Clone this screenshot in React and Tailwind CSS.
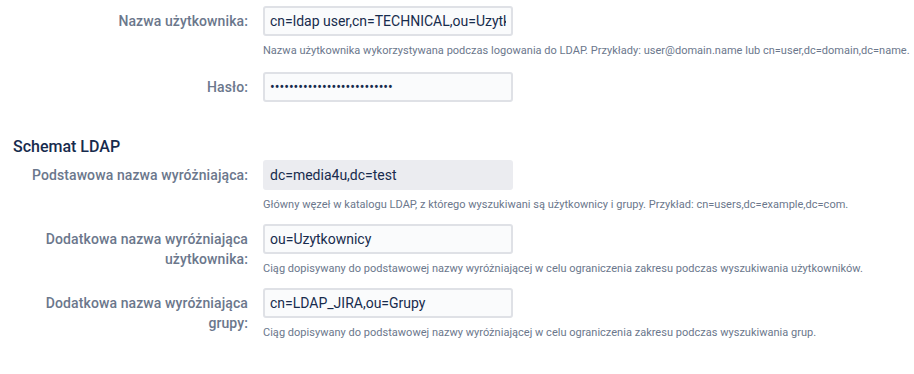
import React from "react";

const font = { fontFamily: "Roboto, 'Noto Sans', sans-serif" };

function Row({ label, value, desc, type = "text", disabled = false, gap = "mb-[11px]" }) {
  return (
    <div className={`flex items-start gap-[15px] ${gap}`}>
      <label className="w-[235px] shrink-0 text-right pt-[5px] text-[14px] leading-[20px] font-medium tracking-[0.1px] text-[#6b778c]">
        {label}
      </label>
      <div className="flex flex-col">
        <input
          type={type}
          readOnly
          value={value}
          className={`w-[250px] h-[30px] rounded-[3px] border-2 px-[5px] text-[14px] text-[#172b4d] outline-none ${
            disabled ? "bg-[#ebecf0] border-[#ebecf0]" : "bg-[#fafbfc] border-[#dfe1e6]"
          }`}
          style={font}
        />
        {desc && (
          <div className="mt-[7px] text-[11px] leading-[16px] text-[#6b778c] whitespace-nowrap tracking-[0.02px]">{desc}</div>
        )}
      </div>
    </div>
  );
}

export default function App() {
  return (
    <div className="w-[914px] h-[374px] bg-white pt-[6px] pl-[13px]" style={font}>
      <Row
        label="Nazwa użytkownika:"
        value="cn=ldap user,cn=TECHNICAL,ou=Uzytkownicy,dc=media4u,dc=test"
        desc="Nazwa użytkownika wykorzystywana podczas logowania do LDAP. Przykłady: user@domain.name lub cn=user,dc=domain,dc=name."
        gap="mb-[13px]"
      />
      <Row label="Hasło:" type="password" value="abcdefghijklmnopqrstuvwxyz" gap="" />
      <h2 className="mt-[35px] mb-[3px] text-[16px] leading-[20px] font-medium text-[#172b4d]">Schemat LDAP</h2>
      <Row
        label="Podstawowa nazwa wyróżniająca:"
        value="dc=media4u,dc=test"
        disabled
        desc="Główny węzeł w katalogu LDAP, z którego wyszukiwani są użytkownicy i grupy. Przykład: cn=users,dc=example,dc=com."
      />
      <Row
        label="Dodatkowa nazwa wyróżniająca użytkownika:"
        value="ou=Uzytkownicy"
        desc="Ciąg dopisywany do podstawowej nazwy wyróżniającej w celu ograniczenia zakresu podczas wyszukiwania użytkowników."
      />
      <Row
        label="Dodatkowa nazwa wyróżniająca grupy:"
        value="cn=LDAP_JIRA,ou=Grupy"
        desc="Ciąg dopisywany do podstawowej nazwy wyróżniającej w celu ograniczenia zakresu podczas wyszukiwania grup."
        gap=""
      />
    </div>
  );
}
